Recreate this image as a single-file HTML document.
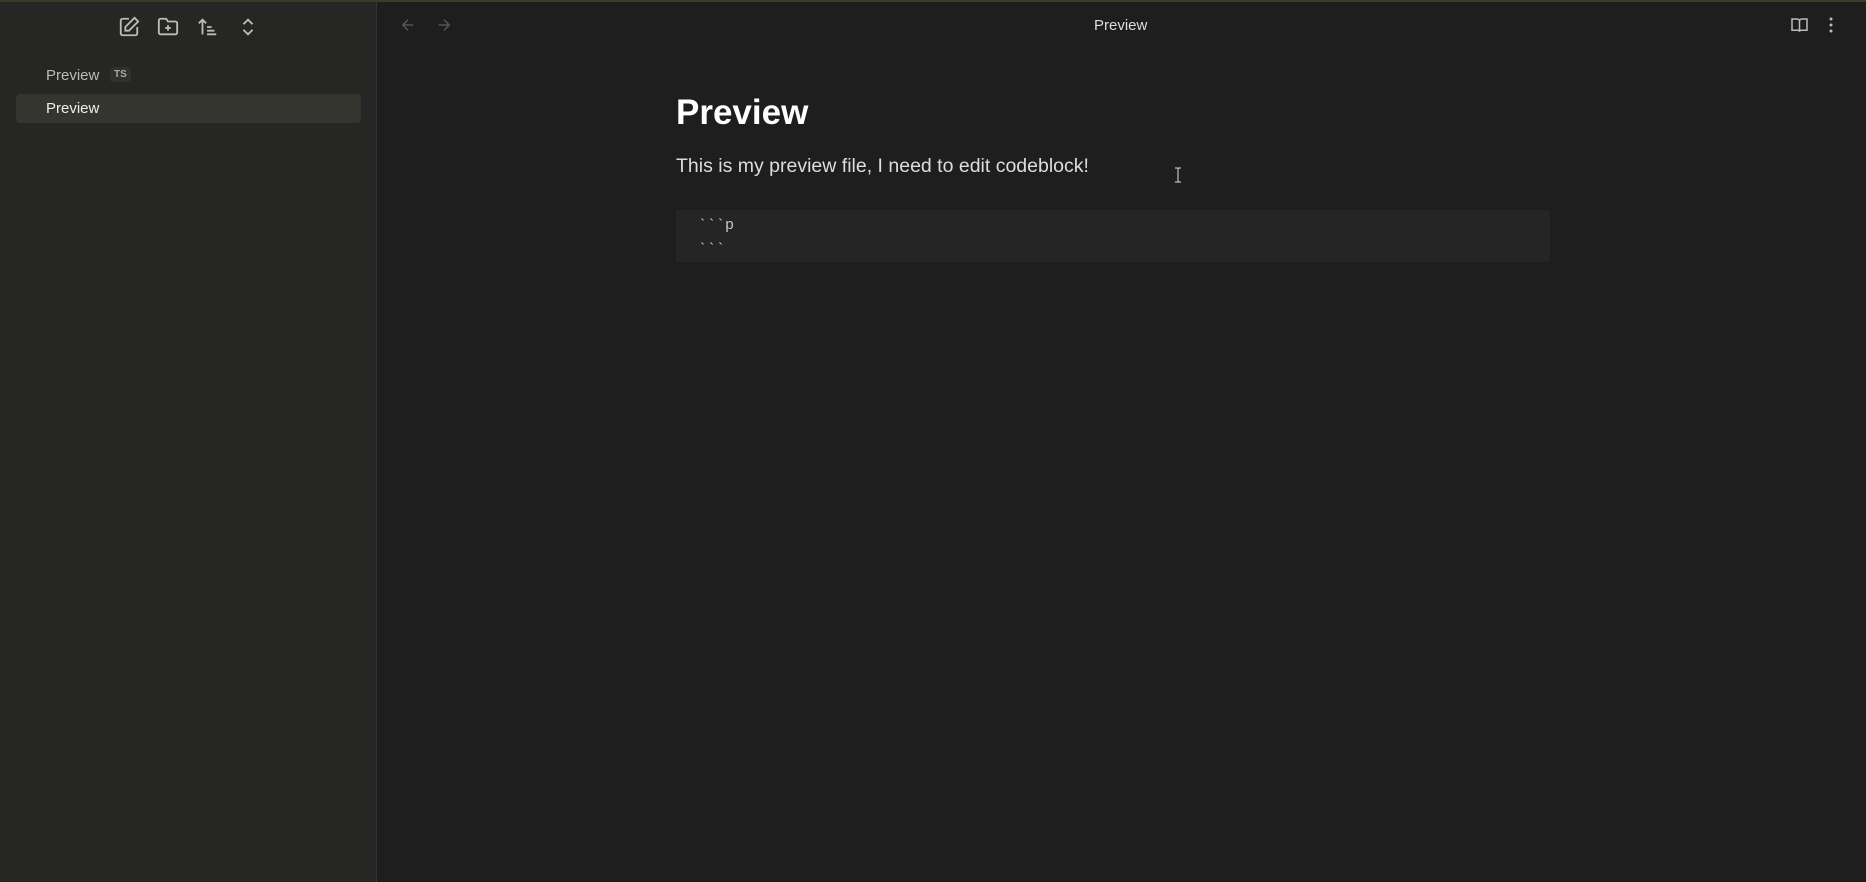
<!DOCTYPE html>
<html><head><meta charset="utf-8"><style>
body{margin:0;width:1866px;height:882px;background:#1e1e1f;font-family:"Liberation Sans",sans-serif;overflow:hidden;position:relative}
.side{position:absolute;left:0;top:0;width:376px;height:882px;background:#262624;border-right:1px solid #333}
.top{position:absolute;left:0;top:0;width:1866px;height:2px;background:#3b3b2a}
.ic{position:absolute;top:16px}
.file{position:absolute;left:46px;font-size:15px;color:#bbb}
.sel{position:absolute;left:16px;top:94px;width:345px;height:29px;background:#35352f;border-radius:4px}
.ts{position:absolute;left:110px;top:67px;font-size:10px;color:#aaa;background:#30302c;padding:2px 4px;border-radius:3px;font-weight:bold}
.title{position:absolute;left:1094px;top:17px;font-size:15px;color:#ddd}
h1{position:absolute;left:676px;top:93px;margin:0;font-size:35px;color:#fff;font-weight:bold}
.p{position:absolute;left:676px;top:155px;font-size:19.5px;color:#ddd}
.code{position:absolute;left:676px;top:210px;width:874px;height:52px;background:#252526}
.ln{position:absolute;left:698px;font-family:"Liberation Mono",monospace;font-size:15px;color:#c8c8c8;z-index:2}
</style></head><body>
<div class="side">
<svg class="ic" style="left:118px" width="22" height="22" viewBox="0 0 24 24" fill="none" stroke="#bbb" stroke-width="2"><path d="M12 3H5a2 2 0 0 0-2 2v14a2 2 0 0 0 2 2h14a2 2 0 0 0 2-2v-7"/><path d="M18 2l4 4-10 10H8v-4z"/></svg>
<svg class="ic" style="left:157px" width="22" height="22" viewBox="0 0 24 24" fill="none" stroke="#bbb" stroke-width="2"><path d="M4 20h16a2 2 0 0 0 2-2V8a2 2 0 0 0-2-2h-8l-2-3H4a2 2 0 0 0-2 2v13a2 2 0 0 0 2 2z"/><path d="M12 10v6M9 13h6"/></svg>
<svg class="ic" style="left:197px" width="22" height="22" viewBox="0 0 24 24" fill="none" stroke="#bbb" stroke-width="2"><path d="M6 20V4M2 8l4-4 4 4M11 12h5M11 16h8M11 20h10"/></svg>
<svg class="ic" style="left:237px" width="22" height="22" viewBox="0 0 24 24" fill="none" stroke="#bbb" stroke-width="2"><path d="M7 9l5-5 5 5M7 15l5 5 5-5"/></svg>
<div class="file" style="top:67px">Preview</div><div class="ts">TS</div>
<div class="sel"></div><div class="file" style="top:100px;color:#eee">Preview</div>
</div>
<div class="top"></div>
<svg style="position:absolute;left:399px;top:16px" width="18" height="18" viewBox="0 0 24 24" fill="none" stroke="#555" stroke-width="2"><path d="M19 12H5M12 5l-7 7 7 7"/></svg>
<svg style="position:absolute;left:435px;top:16px" width="18" height="18" viewBox="0 0 24 24" fill="none" stroke="#555" stroke-width="2"><path d="M5 12h14M12 5l7 7-7 7"/></svg>
<div class="title">Preview</div>
<svg style="position:absolute;left:1790px;top:16px" width="19" height="18" viewBox="0 0 24 24" fill="none" stroke="#bbb" stroke-width="2"><path d="M2 4h7a3 3 0 0 1 3 3v14a2 2 0 0 0-2-2H2zM22 4h-7a3 3 0 0 0-3 3v14a2 2 0 0 1 2-2h8z"/></svg>
<svg style="position:absolute;left:1826px;top:16px" width="10" height="18" viewBox="0 0 10 24" fill="#bbb"><circle cx="5" cy="4" r="2"/><circle cx="5" cy="12" r="2"/><circle cx="5" cy="20" r="2"/></svg>
<h1>Preview</h1>
<div class="p">This is my preview file, I need to edit codeblock!</div>
<div class="code"></div>
<span class="ln" style="top:217px">&#96;&#96;&#96;p</span>
<span class="ln" style="top:241px">&#96;&#96;&#96;</span>
<svg style="position:absolute;left:1174px;top:167px" width="8" height="16" viewBox="0 0 8 16" fill="none" stroke="#ddd" stroke-width="1"><path d="M1 1h6M4 1v14M1 15h6"/></svg>
</body></html>
